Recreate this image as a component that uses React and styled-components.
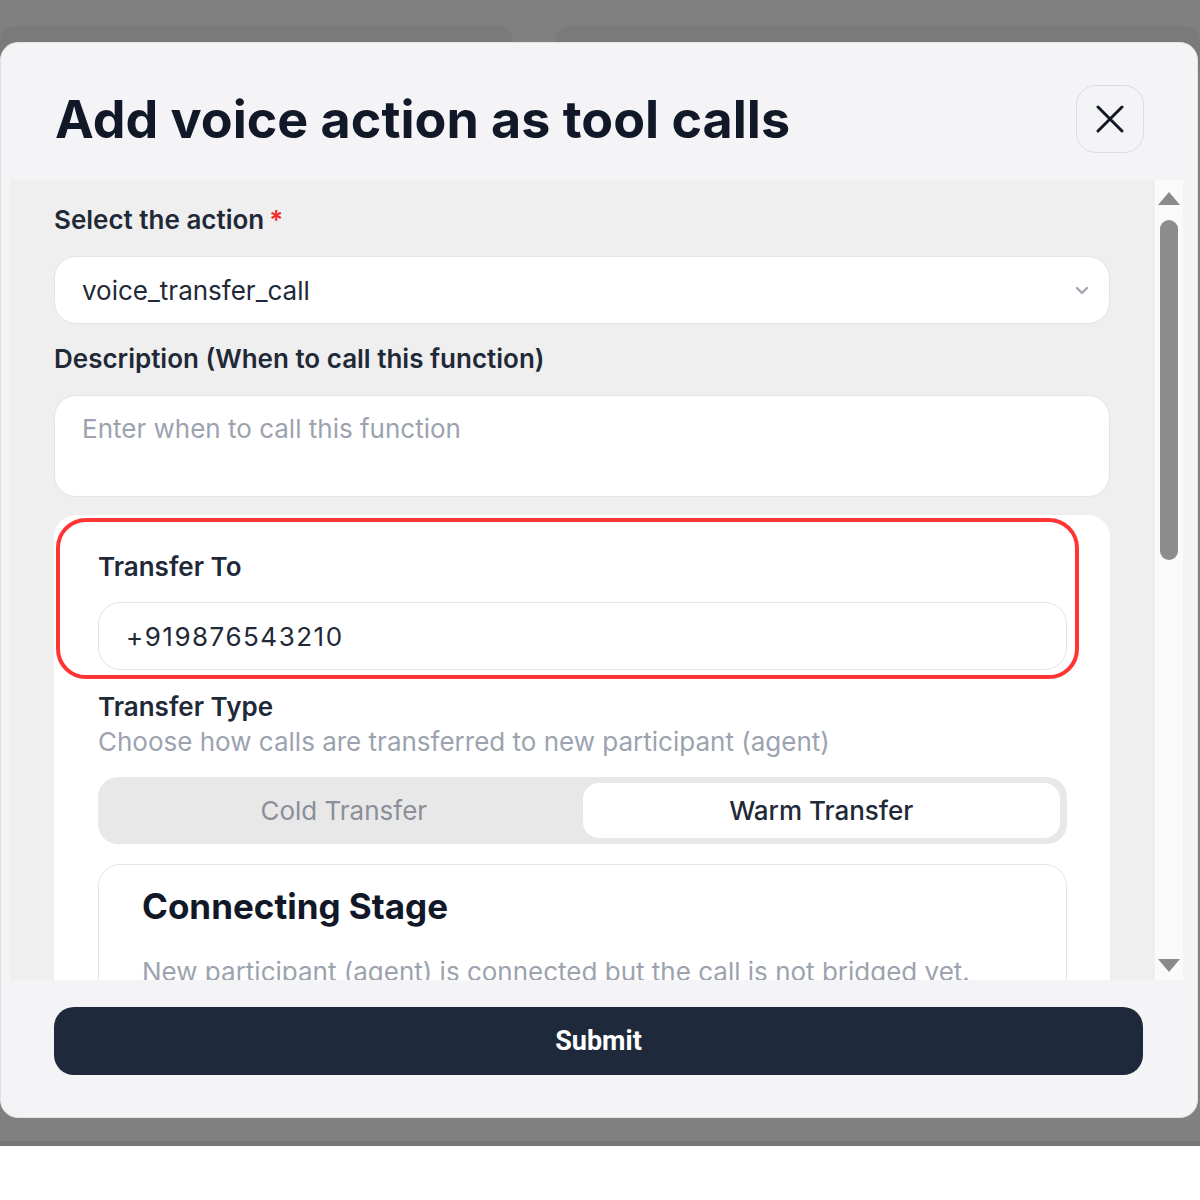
import React from "react";
import styled, { createGlobalStyle } from "styled-components";

const Global = createGlobalStyle`
  html, body { margin: 0; padding: 0; background: #ffffff; }
  body { font-family: Inter, "Noto Sans", sans-serif; }
  * { box-sizing: border-box; }
`;

const Backdrop = styled.div`
  position: relative;
  height: 1146px;
  background: #808080;
  border-bottom: 5px solid #777;
  padding-top: 42px;
  overflow: hidden;
`;

const BackPanels = styled.div`
  position: absolute;
  top: 26px;
  left: 0;
  right: 0;
  display: flex;
  gap: 42px;
`;

const BackPanel = styled.div`
  height: 40px;
  background: #7a7a7a;
  border-radius: 14px 14px 0 0;
  flex: ${(p) => p.$flex};
`;

const Modal = styled.div`
  position: relative;
  width: 1198px;
  height: 1076px;
  background: #f4f4f6;
  border-radius: 18px;
  border: 1px solid #e2e2e4;
  display: flex;
  flex-direction: column;
  overflow: hidden;
`;

const Header = styled.div`
  height: 137px;
  flex: none;
  display: flex;
  align-items: center;
  justify-content: space-between;
  padding: 15px 53px 0 54px;
`;

const Title = styled.h1`
  margin: 0;
  font-family: Inter, sans-serif;
  font-weight: 700;
  font-size: 52px;
  color: #111827;
`;

const CloseBtn = styled.button`
  width: 68px;
  height: 68px;
  border-radius: 20px;
  border: 1.5px solid #dcdcdf;
  background: #f4f4f6;
  display: flex;
  align-items: center;
  justify-content: center;
  padding: 0;
  cursor: pointer;
`;

const ScrollArea = styled.div`
  height: 800px;
  flex: none;
  margin: 0 14px 0 9px;
  background: #efefef;
  display: flex;
`;

const Content = styled.div`
  flex: 1;
  overflow: hidden;
  padding: 25px 45px 0 44px;
  display: flex;
  flex-direction: column;
`;

const Label = styled.div`
  flex: none;
  font-size: 26px;
  line-height: 30px;
  font-weight: 600;
  color: #1f2937;
  margin-top: ${(p) => p.$mt || 0}px;
`;

const Req = styled.span`
  color: #ef2b2b;
  margin-left: 5px;
`;

const Field = styled.div`
  flex: none;
  margin-top: ${(p) => p.$mt || 21}px;
  height: ${(p) => p.$h || 68}px;
  background: #ffffff;
  border: 1.5px solid #e4e4e6;
  border-radius: 22px;
  display: flex;
  align-items: ${(p) => (p.$top ? "flex-start" : "center")};
  justify-content: space-between;
  padding: ${(p) => (p.$top ? "17px 22px 0 27px" : "0 20px 0 27px")};
  font-size: ${(p) => p.$fs || 26}px;
  letter-spacing: ${(p) => p.$ls || 0}px;
  color: ${(p) => (p.$placeholder ? "#9ca3af" : "#1f2937")};
`;

const Card = styled.div`
  margin-top: 18px;
  background: #ffffff;
  border-radius: 22px;
  padding: 37px 43px 0 44px;
  display: flex;
  flex-direction: column;
  flex: none;
`;

const Highlighted = styled.div`
  position: relative;
  display: flex;
  flex-direction: column;
`;

const HighlightRing = styled.div`
  position: absolute;
  left: -42px;
  top: -34px;
  right: -12px;
  bottom: -9px;
  border: 4px solid #ff3535;
  border-radius: 30px;
  pointer-events: none;
`;

const SubText = styled.div`
  margin-top: 5px;
  font-size: 26px;
  line-height: 30px;
  color: #9ca3af;
`;

const Segmented = styled.div`
  margin-top: 20px;
  height: 67px;
  background: #e8e8e8;
  border-radius: 20px;
  display: grid;
  grid-template-columns: 1fr 1fr;
  padding: 6px 7px;
`;

const Segment = styled.div`
  display: flex;
  align-items: center;
  justify-content: center;
  border-radius: 16px;
  font-size: 26px;
  background: ${(p) => (p.$active ? "#ffffff" : "transparent")};
  color: ${(p) => (p.$active ? "#1f2937" : "#8a8f98")};
  font-weight: ${(p) => (p.$active ? 500 : 400)};
`;

const StageCard = styled.div`
  margin-top: 20px;
  border: 1.5px solid #e4e4e6;
  border-radius: 22px;
  padding: 20px 43px 40px 43px;
`;

const StageTitle = styled.div`
  font-size: 35px;
  line-height: 42px;
  font-weight: 700;
  color: #111827;
`;

const StageText = styled.div`
  margin-top: 30px;
  font-size: 26px;
  line-height: 30px;
  color: #9ca3af;
`;

const Scrollbar = styled.div`
  width: 28px;
  flex: none;
  background: #fafafa;
  display: flex;
  flex-direction: column;
  align-items: center;
  padding: 12px 0 8px;
`;

const Arrow = styled.div`
  width: 0;
  height: 0;
  border-left: 11px solid transparent;
  border-right: 11px solid transparent;
  ${(p) =>
    p.$down
      ? "border-top: 13px solid #8a8a8a; margin-top: auto;"
      : "border-bottom: 13px solid #8a8a8a;"}
`;

const Thumb = styled.div`
  margin-top: 15px;
  width: 18px;
  height: 340px;
  border-radius: 9px;
  background: #8c8c8c;
`;

const Footer = styled.div`
  flex: 1;
  padding: 27px 54px 0 53px;
`;

const SubmitBtn = styled.button`
  width: 100%;
  height: 68px;
  border: none;
  border-radius: 20px;
  background: #1e293b;
  color: #ffffff;
  font-family: Roboto, Inter, sans-serif;
  font-weight: 700;
  font-size: 27px;
  cursor: pointer;
`;

const XIcon = () => (
  <svg width="28" height="28" viewBox="0 0 28 28" fill="none">
    <path d="M2 2L26 26M26 2L2 26" stroke="#111827" strokeWidth="3" strokeLinecap="round" />
  </svg>
);

const Chevron = () => (
  <svg width="14" height="9" viewBox="0 0 14 9" fill="none">
    <path d="M2 2L7 7L12 2" stroke="#a3a7ae" strokeWidth="2.4" strokeLinecap="round" strokeLinejoin="round" />
  </svg>
);

export default function App() {
  return (
    <>
      <Global />
      <Backdrop>
        <BackPanels>
          <BackPanel $flex="0 0 513px" />
          <BackPanel $flex="1" />
        </BackPanels>
        <Modal>
          <Header>
            <Title>Add voice action as tool calls</Title>
            <CloseBtn aria-label="Close">
              <XIcon />
            </CloseBtn>
          </Header>
          <ScrollArea>
            <Content>
              <Label>
                Select the action<Req>*</Req>
              </Label>
              <Field>
                <span>voice_transfer_call</span>
                <Chevron />
              </Field>
              <Label $mt={20}>Description (When to call this function)</Label>
              <Field $h={102} $top $placeholder>
                Enter when to call this function
              </Field>
              <Card>
                <Highlighted>
                  <Label>Transfer To</Label>
                  <Field $mt={20} $fs={26} $ls={1.5}>
                    +919876543210
                  </Field>
                  <HighlightRing />
                </Highlighted>
                <Label $mt={22}>Transfer Type</Label>
                <SubText>Choose how calls are transferred to new participant (agent)</SubText>
                <Segmented>
                  <Segment>Cold Transfer</Segment>
                  <Segment $active>Warm Transfer</Segment>
                </Segmented>
                <StageCard>
                  <StageTitle>Connecting Stage</StageTitle>
                  <StageText>New participant (agent) is connected but the call is not bridged yet.</StageText>
                </StageCard>
              </Card>
            </Content>
            <Scrollbar>
              <Arrow />
              <Thumb />
              <Arrow $down />
            </Scrollbar>
          </ScrollArea>
          <Footer>
            <SubmitBtn>Submit</SubmitBtn>
          </Footer>
        </Modal>
      </Backdrop>
    </>
  );
}
